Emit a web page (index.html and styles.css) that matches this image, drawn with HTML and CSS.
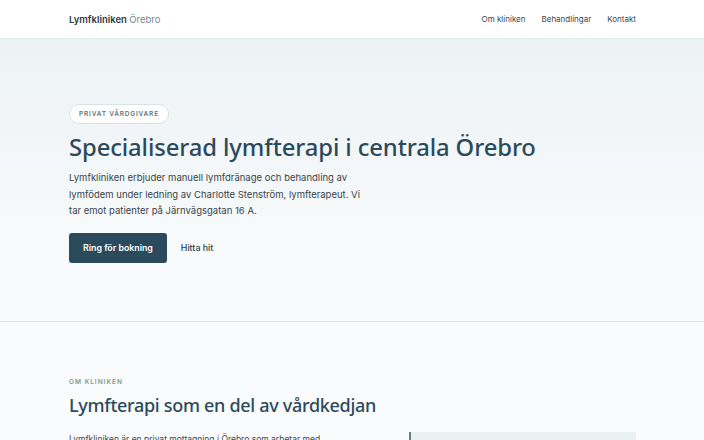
FILE: index.html
```html
<!DOCTYPE html>
<html lang="sv">
<head>
    <meta charset="UTF-8">
    <meta name="viewport" content="width=device-width, initial-scale=1.0">
    <title>Lymfkliniken Örebro</title>
    <link rel="stylesheet" href="styles.css">
</head>
<body>
    <header class="site-header">
        <div class="wrap header-row">
            <a class="brand" href="#">Lymfkliniken <span>Örebro</span></a>
            <nav class="nav">
                <a href="#om">Om kliniken</a>
                <a href="#behandlingar">Behandlingar</a>
                <a href="#kontakt">Kontakt</a>
            </nav>
        </div>
    </header>

    <section class="hero">
        <div class="wrap">
            <span class="badge">Privat vårdgivare</span>
            <h1>Specialiserad lymfterapi i centrala Örebro</h1>
            <p class="lead">Lymfkliniken erbjuder manuell lymfdränage och behandling av lymfödem under ledning av Charlotte Stenström, lymfterapeut. Vi tar emot patienter på Järnvägsgatan 16 A.</p>
            <div class="actions">
                <a class="btn" href="#kontakt">Ring för bokning</a>
                <a class="link" href="#hitta">Hitta hit</a>
            </div>
        </div>
    </section>

    <section class="about" id="om">
        <div class="wrap">
            <div class="eyebrow">Om kliniken</div>
            <h2>Lymfterapi som en del av vårdkedjan</h2>
            <div class="about-grid">
                <p>Lymfkliniken är en privat mottagning i Örebro som arbetar med behandling av lymfödem och andra svullnadstillstånd.</p>
                <div class="fact-card"></div>
            </div>
        </div>
    </section>
</body>
</html>
```

FILE: styles.css
```css
:root {
    --ink: #2b4a5c;
    --text: #3d4950;
    --muted: #6a757b;
    --line: #dde4e7;
    --sage: #7f9a8c;
}

* {
    margin: 0;
    padding: 0;
    box-sizing: border-box;
}

body {
    font-family: Inter, "Noto Sans", sans-serif;
    color: var(--text);
    background: #f9fbfc;
}

a {
    text-decoration: none;
    color: inherit;
}

.wrap {
    width: 568px;
    margin: 0 auto;
    padding-left: 1px;
}

.site-header {
    height: 39px;
    background: #fff;
    border-bottom: 1px solid #e3eaec;
}

.header-row {
    height: 100%;
    display: flex;
    align-items: center;
    justify-content: space-between;
}

.brand {
    font-size: 9.5px;
    font-weight: 600;
    color: #2a3b45;
}

.brand span {
    font-weight: 400;
    color: #7c868b;
}

.nav {
    display: flex;
    gap: 16px;
    font-size: 8px;
    color: #3c464c;
}

.hero {
    height: 283px;
    padding-top: 61px;
    background: linear-gradient(to bottom, #edf2f4, #f8fafb 75%);
    border-bottom: 1px solid var(--line);
}

.badge {
    display: inline-block;
    padding: 5px 9px;
    border: 1px solid #dbe2e5;
    border-radius: 11px;
    background: #fff;
    font-size: 6.5px;
    font-weight: 600;
    letter-spacing: 0.8px;
    text-transform: uppercase;
    color: #66747b;
}

h1 {
    margin-top: 7px;
    font-family: "Noto Sans", sans-serif;
    font-size: 23.8px;
    font-weight: 500;
    color: var(--ink);
    letter-spacing: -0.1px;
}

.lead {
    margin-top: 7px;
    width: 300px;
    font-size: 9.5px;
    line-height: 16.5px;
    color: #37444b;
}

.actions {
    margin-top: 13px;
    display: flex;
    align-items: center;
    gap: 14px;
}

.btn {
    display: inline-block;
    height: 30px;
    line-height: 30px;
    padding: 0 14px;
    border-radius: 3px;
    background: var(--ink);
    color: #fff;
    font-size: 8.8px;
    font-weight: 600;
}

.link {
    font-size: 8.8px;
    font-weight: 500;
    color: #2a3b45;
}

.about {
    padding-top: 56px;
}

.eyebrow {
    font-size: 6.5px;
    font-weight: 600;
    letter-spacing: 1px;
    text-transform: uppercase;
    color: var(--sage);
}

h2 {
    margin-top: 7px;
    font-family: "Noto Sans", sans-serif;
    font-size: 18px;
    font-weight: 500;
    letter-spacing: -0.3px;
    color: var(--ink);
}

.about-grid {
    margin-top: 15px;
    display: grid;
    grid-template-columns: 1fr 227px;
    gap: 40px;
}

.about-grid p {
    max-width: 270px;
    font-size: 8.5px;
    line-height: 15px;
    color: var(--text);
}

.fact-card {
    height: 120px;
    background: #ebf1f3;
    border-left: 2px solid #6c7a80;
}
```
